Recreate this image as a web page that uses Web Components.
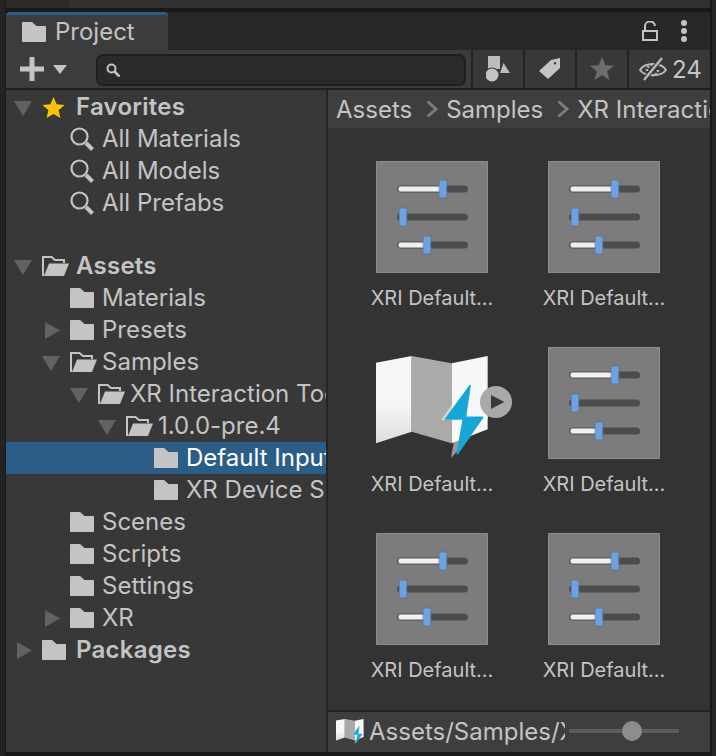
<!DOCTYPE html>
<html>
<head>
<meta charset="utf-8">
<title>Project</title>
<style>
html, body { margin: 0; height: 100%; background: #191919; overflow: hidden; }
</style>
</head>
<body>
<project-window>
    <tree-row slot="tree" arrow="down" icon="star" bold>Favorites</tree-row>
    <tree-row slot="tree" level="1" icon="search">All Materials</tree-row>
    <tree-row slot="tree" level="1" icon="search">All Models</tree-row>
    <tree-row slot="tree" level="1" icon="search">All Prefabs</tree-row>
    <tree-row slot="tree" spacer></tree-row>
    <tree-row slot="tree" arrow="down" icon="open" bold>Assets</tree-row>
    <tree-row slot="tree" level="1" icon="folder">Materials</tree-row>
    <tree-row slot="tree" level="1" arrow="right" icon="folder">Presets</tree-row>
    <tree-row slot="tree" level="1" arrow="down" icon="open">Samples</tree-row>
    <tree-row slot="tree" level="2" arrow="down" icon="open">XR Interaction Toolkit</tree-row>
    <tree-row slot="tree" level="3" arrow="down" icon="open">1.0.0-pre.4</tree-row>
    <tree-row slot="tree" level="4" icon="folder" selected>Default Input Actions</tree-row>
    <tree-row slot="tree" level="4" icon="folder">XR Device Simulator</tree-row>
    <tree-row slot="tree" level="1" icon="folder">Scenes</tree-row>
    <tree-row slot="tree" level="1" icon="folder">Scripts</tree-row>
    <tree-row slot="tree" level="1" icon="folder">Settings</tree-row>
    <tree-row slot="tree" level="1" arrow="right" icon="folder">XR</tree-row>
    <tree-row slot="tree" arrow="right" icon="folder" bold>Packages</tree-row>

    <asset-tile slot="grid" icon="sliders">XRI Default...</asset-tile>
    <asset-tile slot="grid" icon="sliders">XRI Default...</asset-tile>
    <asset-tile slot="grid" icon="map">XRI Default...</asset-tile>
    <asset-tile slot="grid" icon="sliders">XRI Default...</asset-tile>
    <asset-tile slot="grid" icon="sliders">XRI Default...</asset-tile>
    <asset-tile slot="grid" icon="sliders">XRI Default...</asset-tile>
</project-window>

<script>
const MAP_DEFS = `
    <linearGradient id="fade" x1="0" y1="0" x2="0" y2="1">
        <stop offset=".55" stop-color="#f5f6f6"/><stop offset="1" stop-color="#dcdddd"/>
    </linearGradient>`;

const MAP_SHAPES = `
    <path fill="url(#fade)" d="M48 68 155 48V275L48 310Z"/>
    <path fill="#aaaba9" d="M155 48 275 70V310L155 275Z"/>
    <path fill="#f6f7f7" d="M275 70 383 48V268L275 310Z"/>
    <path fill="#fff" opacity=".5" d="M326 122 243 240H293L273 354 388 228H332Z"/>
    <path fill="#17a7d6" stroke="#17a7d6" stroke-width="5" stroke-linejoin="round" d="M330 137 257 237H310L292 341 368 232H316Z"/>`;

function sliders() {
    const rows = [[28, 67], [56, 27], [84, 51]];
    const body = rows.map(([y, x]) => `
        <rect x="21" y="${y - 3.5}" width="71" height="7" rx="3.5" fill="#4c4c4c"/>
        ${x > 30 ? `<rect x="22.500" y="${y - 2.5}" width="${x - 23}" height="5" rx="2" fill="#efefef" stroke="#a8a8a8"/>` : ''}
        <rect x="${x - 4.5}" y="${y - 9.5}" width="9" height="19" fill="#5f6f82" opacity=".6"/>
        <rect x="${x - 3.5}" y="${y - 8.5}" width="7" height="17" fill="#6ca2e3"/>`).join('');
    return `<svg viewBox="0 0 112 112"><rect x=".5" y=".5" width="111" height="111" fill="#7c7c7c" stroke="#8b8b8b"/>${body}</svg>`;
}

const ICONS = {
    folder: `<svg viewBox="0 0 24 20"><path fill="currentColor" d="M1 0H10L14.500 4H23A1 1 0 0 1 24 5V19A1 1 0 0 1 23 20H1A1 1 0 0 1 0 19V1A1 1 0 0 1 1 0Z"/></svg>`,
    open: `<svg viewBox="0 0 27 20"><path fill="none" stroke="currentColor" stroke-width="2" d="M1 20V1H9.500L13 4H22V7"/><path fill="currentColor" d="M7 7.500H27L22 20H2Z"/></svg>`,
    search: `<svg viewBox="0 0 24 24"><circle cx="9.500" cy="9.500" r="8" fill="none" stroke="currentColor" stroke-width="2.200"/><path stroke="currentColor" stroke-width="4" d="M16 16 22.500 22.500"/></svg>`,
    star: `<svg viewBox="0 0 24 24"><path fill="#ffc107" d="M12 1 15.300 8.500 23.500 9.300 17.300 14.800 19.200 23 12 18.700 4.800 23 6.700 14.800 .5 9.300 8.700 8.500Z"/></svg>`,
    sliders: sliders(),
    map: `<svg viewBox="48 21 336 336" style="overflow:visible"><defs>${MAP_DEFS}</defs>${MAP_SHAPES}
        <circle cx="408" cy="186" r="48" fill="#a9a9a9"/>
        <path fill="#3a3a3a" d="M393 165 433 186 393 207Z"/></svg>`,
    mapsmall: `<svg viewBox="48 40 340 310" style="overflow:visible"><defs>${MAP_DEFS}</defs>${MAP_SHAPES}</svg>`,
    plus: `<svg viewBox="0 0 24 24"><path fill="none" stroke="#c4c4c4" stroke-width="5" d="M12 0V24M0 12H24"/></svg>`,
    caret: `<svg viewBox="0 0 14 9"><path fill="#c4c4c4" d="M0 0H14L7 9Z"/></svg>`,
    lens: `<svg viewBox="0 0 14 14"><circle cx="5.500" cy="5.500" r="4" fill="none" stroke="#c4c4c4" stroke-width="2"/><path stroke="#c4c4c4" stroke-width="2.600" d="M8.500 8.500 13.500 13.500"/></svg>`,
    lock: `<svg viewBox="0 0 16 20"><path fill="none" stroke="#c4c4c4" stroke-width="2" d="M1 10H15V19H1ZM3 10V6A5 5 0 0 1 13 5"/></svg>`,
    kebab: `<svg viewBox="0 0 6 22"><circle cx="3" cy="3" r="3" fill="#c4c4c4"/><circle cx="3" cy="11" r="3" fill="#c4c4c4"/><circle cx="3" cy="19" r="3" fill="#c4c4c4"/></svg>`,
    type: `<svg viewBox="0 0 24 30"><path fill="#bdbdbd" d="M14 19 17.500 9 24 19Z"/><rect x="2" y="2" width="12" height="13" fill="#bdbdbd"/><circle cx="6" cy="21" r="7.500" fill="#383838"/><circle cx="6" cy="21" r="6.500" fill="#c4c4c4"/></svg>`,
    tag: `<svg viewBox="0 0 22 22"><path fill="#c4c4c4" fill-rule="evenodd" d="M0 13 12 2 21 0 21 10 9 21ZM16 4A1.200 1.200 0 1 0 16 6.400 1.200 1.200 0 1 0 16 4Z"/></svg>`,
    greystar: `<svg viewBox="0 0 24 24"><path fill="#6d6d6d" d="M12 0 15.300 8.300 24 8.700 17.200 14.300 19.500 23 12 18.200 4.500 23 6.800 14.300 0 8.700 8.700 8.300Z"/></svg>`,
    eye: `<svg viewBox="0 0 28 24"><path fill="none" stroke="#b8b8b8" stroke-width="2" d="M1 13C6 5 22 5 27 13 22 20 6 20 1 13Z"/><path fill="none" stroke="#b8b8b8" stroke-width="2.500" stroke-dasharray="2 1.500" d="M8 14A6 6 0 0 1 18 9M19 13A5 5 0 0 1 13 18"/><path stroke="#383838" stroke-width="4.500" d="M5 23 23 1"/><path stroke="#b8b8b8" stroke-width="2.500" d="M5 23 23 1"/></svg>`,
    chevron: `<svg viewBox="0 0 12 18"><path fill="none" stroke="#7b7b7b" stroke-width="3" d="M1.500 1.500 10 9 1.500 16.500"/></svg>`
};

class UiIcon extends HTMLElement {
    connectedCallback() {
        this.attachShadow({mode: 'open'});
        const w = this.getAttribute('w') || 24;
        const h = this.getAttribute('h') || w;
        this.shadowRoot.innerHTML = `
<style>
:host { display: block; flex: none; width: ${w}px; height: ${h}px; }
svg { display: block; width: 100%; height: 100%; }
</style>
${ICONS[this.getAttribute('name')]}`;
    }
}
customElements.define('ui-icon', UiIcon);

class TreeRow extends HTMLElement {
    connectedCallback() {
        this.attachShadow({mode: 'open'});
        const level = +(this.getAttribute('level') || 0);
        const arrow = this.getAttribute('arrow');
        const icon = this.getAttribute('icon');
        const iconSize = {
            folder: 'w="24" h="20"',
            open: 'w="27" h="20"',
            search: 'w="24" h="24"',
            star: 'w="23" h="23"'
        }[icon];
        const tri = arrow === 'down'
            ? '<path d="M0 3H18L9 18Z"/>'
            : arrow === 'right' ? '<path d="M3 1 18 9.500 3 18Z"/>' : '';
        this.shadowRoot.innerHTML = `
<style>
:host { display: flex; align-items: center; height: 32px; padding-left: ${2 + 28 * level}px; color: #c4c4c4; white-space: nowrap; }
:host([spacer]) { height: 31px; }
:host([selected]) { background: #2c5d87; }
:host([selected]) .label { color: #fff; }
:host([bold]) .label { font-weight: 600; letter-spacing: .25px; margin-left: 2px; }
.arrow { flex: none; width: 30px; height: 18px; display: flex; justify-content: center; }
.arrow svg { width: 18px; height: 18px; fill: #626262; }
.icon { flex: none; width: 32px; padding-left: 4px; }
.label { font: 400 24px/32px Inter, sans-serif; }
</style>
${this.hasAttribute('spacer') ? '' : `
<div class="arrow"><svg viewBox="0 0 18 18">${tri}</svg></div>
<div class="icon"><ui-icon name="${icon}" ${iconSize}></ui-icon></div>
<span class="label"><slot></slot></span>`}`;
    }
}
customElements.define('tree-row', TreeRow);

class AssetTile extends HTMLElement {
    connectedCallback() {
        this.attachShadow({mode: 'open'});
        this.shadowRoot.innerHTML = `
<style>
:host { display: flex; flex-direction: column; align-items: center; width: 172px; height: 186px; color: #c4c4c4; }
.label { margin-top: 12px; font: 400 20px/26px Inter, sans-serif; white-space: nowrap; }
</style>
<ui-icon name="${this.getAttribute('icon')}" w="112"></ui-icon>
<span class="label"><slot></slot></span>`;
    }
}
customElements.define('asset-tile', AssetTile);

class ProjectWindow extends HTMLElement {
    connectedCallback() {
        this.attachShadow({mode: 'open'});
        this.shadowRoot.innerHTML = `
<style>
:host { display: flex; flex-direction: column; height: 756px; width: 716px; color: #c4c4c4; font-family: Inter, sans-serif;
    background: linear-gradient(90deg, #232323 5px, #191919 5px, #191919 712px, #262626 712px); }
.top-strip { height: 8px; flex: none; margin: 0 6px; background: linear-gradient(90deg, #2a2a2a 64px, #323232 64px); }
.frame { margin: 4px 6px; flex: 1; display: flex; flex-direction: column; min-height: 0; }
.tabs { height: 38px; flex: none; display: flex; background: #282828; border-radius: 4px 4px 0 0; }
.tab { width: 162px; background: #3c3c3c; border-top: 3px solid #2c5d87; border-radius: 4px 4px 0 0; box-sizing: border-box; display: flex; align-items: center; gap: 9px; padding: 0 0 2px 16px; font: 400 24px Inter, sans-serif; }
.tabs .end { margin-left: auto; display: flex; align-items: center; gap: 23px; padding-right: 23px; }
.toolbar { height: 40px; flex: none; display: flex; align-items: stretch; background: #3c3c3c; box-sizing: border-box; border-bottom: 2px solid #1f1f1f; }
.add { flex: none; width: 90px; display: flex; align-items: center; gap: 9px; padding-left: 14px; box-sizing: border-box; }
.search { flex: none; width: 370px; height: 32px; margin-top: 4px; box-sizing: border-box; background: #2a2a2a; border: 2px solid #1f1f1f; border-radius: 7px; display: flex; align-items: center; padding-left: 8px; }
.btn { flex: none; width: 52px; box-sizing: border-box; background: #383838; border-left: 2px solid #232323; display: flex; align-items: center; justify-content: center; }
.btn.first { margin-left: 5px; }
.btn.count { width: 83px; gap: 5px; font: 400 24px Inter, sans-serif; justify-content: flex-start; padding-left: 10px; }
.body { flex: 1; display: flex; min-height: 0; }
.tree { flex: none; width: 320px; background: #383838; overflow: hidden; padding-top: 1px; box-sizing: border-box; }
.right { flex: 1; min-width: 0; display: flex; flex-direction: column; border-left: 2px solid #242424; }
.crumbs { height: 38px; flex: none; display: flex; align-items: center; background: #3e3e3e; overflow: hidden; white-space: nowrap; padding-left: 8px; font: 400 24px Inter, sans-serif; }
.crumbs ui-icon { margin: 0 8px 0 14px; }
.grid { flex: 1; background: #333; display: flex; flex-wrap: wrap; align-content: flex-start; padding: 33px 0 0 18px; min-height: 0; overflow: hidden; }
.status { flex: none; display: flex; align-items: center; background: #3e3e3e; border-top: 2px solid #232323; box-sizing: border-box; height: 42px; padding: 0 0 2px 8px; overflow: hidden; }
.path { flex: none; width: 196px; margin-left: 5px; overflow: hidden; white-space: nowrap; font: 400 24px Inter, sans-serif; }
.slider { flex: none; width: 110px; height: 4px; margin-left: 4px; background: #5c5c5c; position: relative; }
.thumb { position: absolute; left: 53px; top: -8px; width: 20px; height: 20px; border-radius: 50%; background: #8d8d8d; }
</style>
<div class="top-strip"></div>
<div class="frame">
    <div class="tabs">
        <div class="tab"><ui-icon name="folder" w="24" h="20"></ui-icon>Project</div>
        <div class="end"><ui-icon name="lock" w="16" h="20"></ui-icon><ui-icon name="kebab" w="6" h="22"></ui-icon></div>
    </div>
    <div class="toolbar">
        <div class="add"><ui-icon name="plus" w="24"></ui-icon><ui-icon name="caret" w="14" h="9"></ui-icon></div>
        <div class="search"><ui-icon name="lens" w="14"></ui-icon></div>
        <div class="btn first"><ui-icon name="type" w="24" h="30"></ui-icon></div>
        <div class="btn"><ui-icon name="tag" w="22"></ui-icon></div>
        <div class="btn"><ui-icon name="greystar" w="24"></ui-icon></div>
        <div class="btn count"><ui-icon name="eye" w="28" h="24"></ui-icon><span>24</span></div>
    </div>
    <div class="body">
        <div class="tree"><slot name="tree"></slot></div>
        <div class="right">
            <div class="crumbs">
                <span>Assets</span><ui-icon name="chevron" w="12" h="18"></ui-icon>
                <span>Samples</span><ui-icon name="chevron" w="12" h="18"></ui-icon>
                <span>XR Interaction Toolkit</span>
            </div>
            <div class="grid"><slot name="grid"></slot></div>
            <div class="status">
                <ui-icon name="mapsmall" w="28" h="26"></ui-icon>
                <div class="path">Assets/Samples/XR Interaction Toolkit</div>
                <div class="slider"><div class="thumb"></div></div>
            </div>
        </div>
    </div>
</div>`;
    }
}
customElements.define('project-window', ProjectWindow);
</script>
</body>
</html>
